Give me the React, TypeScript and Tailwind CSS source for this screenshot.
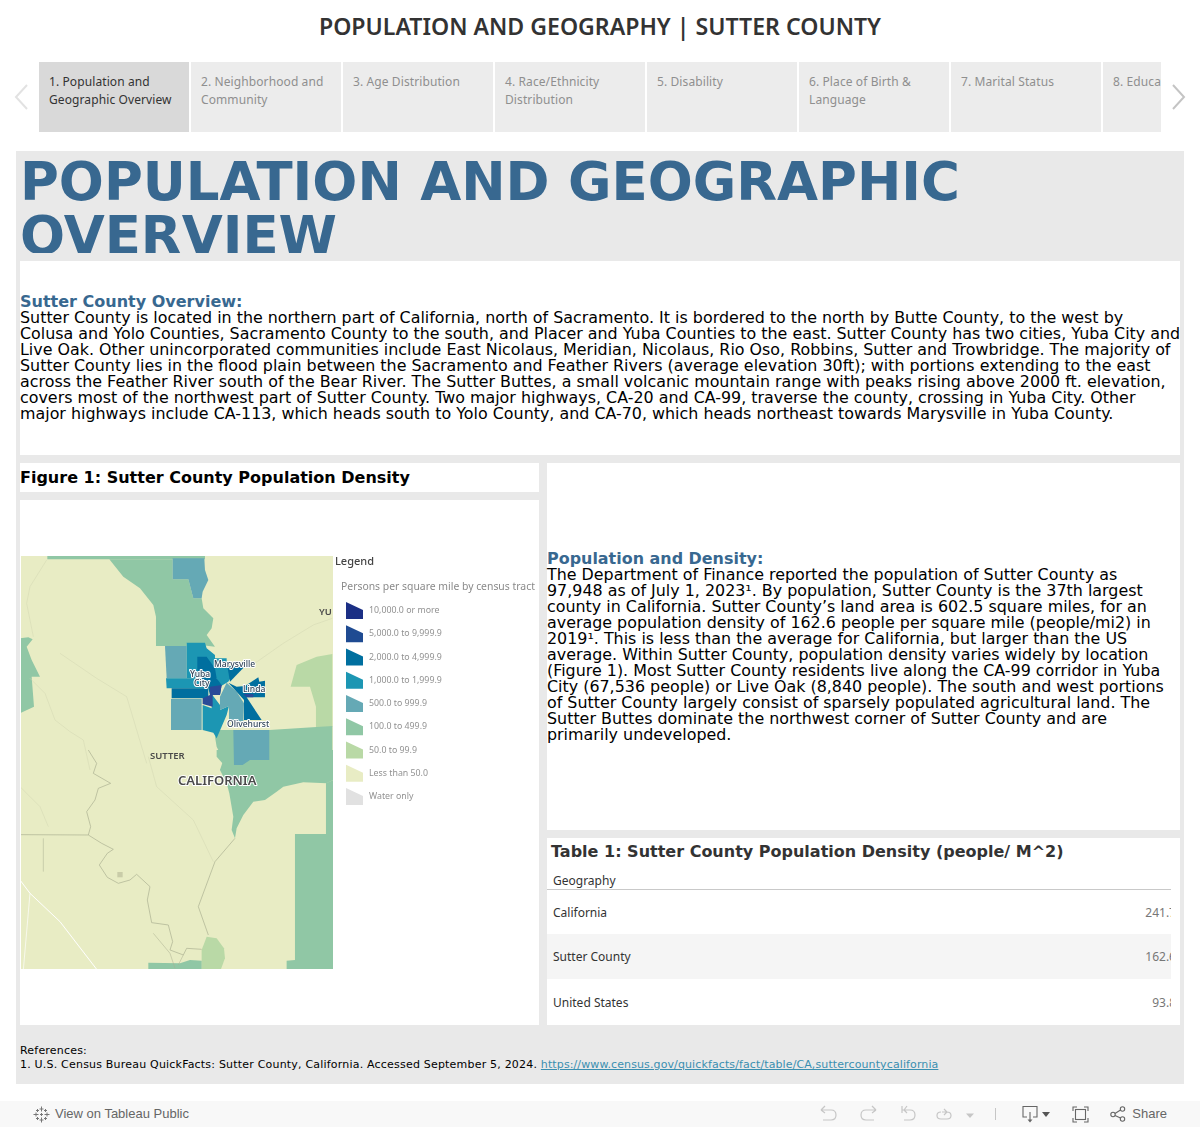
const tabs = [
  "1. Population and Geographic Overview",
  "2. Neighborhood and Community",
  "3. Age Distribution",
  "4. Race/Ethnicity Distribution",
  "5. Disability",
  "6. Place of Birth & Language",
  "7. Marital Status",
  "8. Education",
];

const legend = [
  { color: "#1b2f85", label: "10,000.0 or more" },
  { color: "#1f4b92", label: "5,000.0 to 9,999.9" },
  { color: "#006f9f", label: "2,000.0 to 4,999.9" },
  { color: "#1c96b3", label: "1,000.0 to 1,999.9" },
  { color: "#65a9b5", label: "500.0 to 999.9" },
  { color: "#90c7a5", label: "100.0 to 499.9" },
  { color: "#b9d9a6", label: "50.0 to 99.9" },
  { color: "#e8ecc4", label: "Less than 50.0" },
  { color: "#e1e1e1", label: "Water only" },
];

const rows = [
  { name: "California", value: "241.7", height: "h-[44px]", shaded: false },
  { name: "Sutter County", value: "162.6", height: "h-[45px]", shaded: true },
  { name: "United States", value: "93.8", height: "h-[46px]", shaded: false },
];

const overviewLines = [
  "Sutter County is located in the northern part of California, north of Sacramento. It is bordered to the north by Butte County, to the west by",
  "Colusa and Yolo Counties, Sacramento County to the south, and Placer and Yuba Counties to the east. Sutter County has two cities, Yuba City and",
  "Live Oak. Other unincorporated communities include East Nicolaus, Meridian, Nicolaus, Rio Oso, Robbins, Sutter and Trowbridge. The majority of",
  "Sutter County lies in the flood plain between the Sacramento and Feather Rivers (average elevation 30ft); with portions extending to the east",
  "across the Feather River south of the Bear River. The Sutter Buttes, a small volcanic mountain range with peaks rising above 2000 ft. elevation,",
  "covers most of the northwest part of Sutter County. Two major highways, CA-20 and CA-99, traverse the county, crossing in Yuba City. Other",
  "major highways include CA-113, which heads south to Yolo County, and CA-70, which heads northeast towards Marysville in Yuba County.",
];

const densityLines = [
  "The Department of Finance reported the population of Sutter County as",
  "97,948 as of July 1, 2023¹. By population, Sutter County is the 37th largest",
  "county in California. Sutter County’s land area is 602.5 square miles, for an",
  "average population density of 162.6 people per square mile (people/mi2) in",
  "2019¹. This is less than the average for California, but larger than the US",
  "average. Within Sutter County, population density varies widely by location",
  "(Figure 1). Most Sutter County residents live along the CA-99 corridor in Yuba",
  "City (67,536 people) or Live Oak (8,840 people). The south and west portions",
  "of Sutter County largely consist of sparsely populated agricultural land. The",
  "Sutter Buttes dominate the northwest corner of Sutter County and are",
  "primarily undeveloped.",
];

const sans = "font-['Noto_Sans','Open_Sans',sans-serif]";
const dejavu = "font-['DejaVu_Sans',sans-serif]";

const MapFigure = () => {
  const green = "#90c7a5";
  const pale = "#b9d9a6";
  const mid = "#65a9b5";
  const teal = "#1c96b3";
  const dark = "#006f9f";
  const navy = "#2a4a98";
  const label = {
    paintOrder: "stroke",
    stroke: "#ffffff",
    strokeWidth: 2,
    strokeLinejoin: "round" as const,
  };

  return (
    <svg viewBox="20 500 519 525" className="block w-[519px] h-[525px]">
      <clipPath id="map-clip">
        <rect x="21" y="556" width="312" height="413" />
      </clipPath>
      <g clipPath="url(#map-clip)">
        <g className="blur-[0.5px]">
          <rect x="15" y="550" width="325" height="425" fill="#e8ecc4" />
          <g transform="translate(20 550) scale(0.3333)">
            <path d="M82 18H555V28H82Z" fill={green} />
            <path d="M0 265L25 262 38 268 20 290 35 330 60 380 35 380 42 470 0 490Z" fill={green} />
            <path d="M812 410L830 345 890 320 937 312V530L888 532V470L870 410Z" fill={pale} />
            <path d="M268 28H458V88H505L520 145H545L550 175 565 190 580 205 575 235 560 255 585 290 500 280V288H408V200L400 165 360 115 310 80Z" fill={green} />
            <path d="M458 25H553L555 60 565 90 548 125 545 145H520L505 88H458Z" fill={mid} />
            <path d="M585 560L600 540H748L937 528V660H600L610 630 590 590Z" fill={green} />
            <path d="M435 288H500V385H440Z" fill={mid} />
            <path d="M500 278H555L560 295 585 315V325H620V345L640 370 625 395 600 410 590 385H500Z" fill={teal} />
            <path d="M438 385H560V415H440Z" fill={teal} />
            <path d="M532 320H560L585 355 590 385 605 405 600 435H570L565 415 545 385 532 360Z" fill={dark} />
            <path d="M455 415H565V445H455Z" fill={dark} />
            <path d="M453 447H545V540H453Z" fill={mid} />
            <path d="M548 465L575 475V432L600 465V480L627 468 620 495 590 565 580 548 548 540Z" fill={teal} />
            <path d="M620 398L650 425 672 460 670 515 627 510 627 468 600 480V440Z" fill={mid} />
            <path d="M625 398L650 410 675 408 715 382 718 395 735 392V442H680L725 510H672V450L650 425Z" fill={dark} />
            <path d="M622 348L672 352 630 395Z" fill={dark} />
            <path d="M570 410L605 405 600 435H578V470L548 462V445L570 435Z" fill={navy} />
            <path d="M670 432H700V442H680Z" fill={navy} />
            <g fill="none" stroke="#d3d7b2" strokeWidth="1.5">
              <path d="M80 30L30 110 20 160 40 260" />
              <path d="M30 385L75 430 105 510 150 545 190 570 210 660" />
              <path d="M320 440L380 640" />
              <path d="M320 440L230 385 120 310" />
              <path d="M690 350L790 280 880 225 937 205" />
            </g>
          </g>
          <g transform="translate(20 750) scale(0.3333)">
            <path d="M590 0H940V90L920 100 850 97 790 110 770 125 735 150 700 155 670 195 650 235 645 265 635 240 640 200 628 130 620 100 600 60 612 45 590 20Z" fill={green} />
            <path d="M918 100L940 90V660H800V632L825 630V252H918Z" fill={green} />
            <path d="M545 600L560 560 590 565 612 595 615 625 602 660H545Z" fill={pale} />
            <path d="M385 638L480 640 510 630 545 632V660H385Z" fill={green} />
            <rect x="292" y="366" width="16" height="16" fill="#c9cca8" />
            <g fill="none" stroke="#a9ae90" strokeWidth="2">
              <path d="M205 0L230 40 220 70 272 100 235 115 225 150 200 185 212 230 205 255 245 280 280 298 262 310 238 345 262 382 295 400 330 390 350 373 390 410 382 450 395 518 445 525 458 575 450 600 490 615 500 595 545 598" />
              <path d="M0 254L205 255" />
              <path d="M70 265V365" strokeWidth="1.5" />
              <path d="M645 265L585 335 535 470 565 555" />
              <path d="M490 615L475 645M400 550L450 610 465 655" strokeWidth="1.5" />
            </g>
            <g fill="none" stroke="#d3d7b2" strokeWidth="1.5">
              <path d="M385 20L410 110 520 210 580 335" />
              <path d="M0 110L60 170 85 230" />
            </g>
            <g fill="none" stroke="#ffffff" strokeWidth="3">
              <path d="M0 390L30 430 120 515 230 658" />
              <path d="M30 430L10 660" strokeWidth="2" />
            </g>
          </g>
          <g transform="translate(20 550) scale(0.3333)">
            <path d="M640 540H748V630H690L668 645H642Z" fill={mid} />
          </g>
        </g>
      </g>

      <g className={`${sans} blur-[0.25px]`}>
        <g fill="#33475b" fontSize="8.500" fontWeight="500" style={label}>
          <text x="214" y="667">Marysville</text>
          <text x="190" y="677">Yuba</text>
          <text x="194" y="686">City</text>
          <text x="243" y="692">Linda</text>
          <text x="227" y="727">Olivehurst</text>
        </g>
        <text x="150" y="759" fontSize="9.500" fontWeight="600" fill="#4a4a4a">SUTTER</text>
        <text x="178" y="785" fontSize="13" fontWeight="600" fill="#4a4a4a" style={label}>CALIFORNIA</text>
        <text x="319" y="615" fontSize="9.500" fontWeight="600" fill="#4a4a4a">YU</text>

        <text x="335" y="565" fontSize="11" fontWeight="500" fill="#444444">Legend</text>
        <text x="341" y="590" fontSize="10.400" fill="#8a8a8a">Persons per square mile by census tract</text>
        {legend.map((item, idx) => (
          <g key={item.label}>
            <path
              d={`M346 ${602 + idx * 23.25}L363 ${610 + idx * 23.25}V${619 + idx * 23.25}H346Z`}
              fill={item.color}
            />
            <text x="369" y={613 + idx * 23.25} fontSize="8.800" fill="#929292">
              {item.label}
            </text>
          </g>
        ))}
      </g>
    </svg>
  );
};

const Toolbar = () => (
  <div className="mt-[17px] h-[26px] bg-[#f8f8f8] flex items-center pl-[33px] pr-[33px] font-['Liberation_Sans',sans-serif] text-[13px] text-[#666666]">
    <svg viewBox="0 0 17 17" className="w-[17px] h-[17px] shrink-0" stroke="#777777" strokeWidth="1" fill="none">
      <path d="M8.500 0.500V5.500M6.500 3H10.500M8.500 11.500V16.500M6.500 14H10.500M0.500 8.500H5.500M3 6.500V10.500M11.500 8.500H16.500M14 6.500V10.500M4.500 3V6M3 4.500H6M12.500 3V6M11 4.500H14M4.500 11V14M3 12.500H6M12.500 11V14M11 12.500H14M7 8.500H10M8.500 7V10" />
    </svg>
    <span className="ml-[5px]">View on Tableau Public</span>
    <div className="ml-auto flex items-center">
      <svg viewBox="0 0 154 18" className="w-[154px] h-[18px]" fill="none" stroke="#c6c6c6" strokeWidth="1.2">
        <path d="M1 6H11C14 6 16 8 16 11S14 16 11 16H3M1 6L5 2M1 6L5 9" transform="translate(0 -1)" />
        <path d="M56 6H46C43 6 41 8 41 11S43 16 46 16H54M56 6L52 2M56 6L52 9" transform="translate(0 -1)" />
        <path d="M82 2V9M82 6H90C93 6 95 8 95 11S93 16 90 16H84M84 6L87 2M84 6L87 9" transform="translate(0 -1)" />
        <path d="M122 7H127C129.500 7 131 8.500 131 10.500S129.500 14 127 14H121C118.500 14 117 12.500 117 10.500S118.500 7 121 7M124 4L127 7 124 10" />
        <path d="M149 8.500H157L153 13Z" transform="translate(-3 0)" fill="#c6c6c6" stroke="none" />
      </svg>
      <div className="ml-[21px] w-px h-[12px] bg-[#c6c6c6]" />
      <svg viewBox="0 0 16 18" className="ml-[26px] w-[16px] h-[18px]" fill="none" stroke="#666666" strokeWidth="1.1">
        <path d="M5 12H1V1.500H15V12H11" />
        <path d="M8 7V16" />
        <path d="M5.500 14.500H10.500L8 17.500Z" fill="#666666" stroke="none" />
      </svg>
      <svg viewBox="0 0 8 5" className="ml-[4px] w-[8px] h-[5px]">
        <path d="M0 0H8L4 5Z" fill="#555555" />
      </svg>
      <svg viewBox="0 0 17 17" className="ml-[22px] w-[17px] h-[17px]" fill="none" stroke="#666666" strokeWidth="1.1">
        <path d="M1 5V1H5M12 1H16V5M16 12V16H12M5 16H1V12" />
        <rect x="3.500" y="3.500" width="10" height="10" />
      </svg>
      <svg viewBox="0 0 16 16" className="ml-[21px] w-[16px] h-[16px]" fill="none" stroke="#666666" strokeWidth="1.1">
        <circle cx="3" cy="8.500" r="2.200" />
        <circle cx="12.500" cy="3" r="2.200" />
        <circle cx="12.500" cy="13" r="2.200" />
        <path d="M5 7.500L10.500 4M5 9.500L10.500 12" />
      </svg>
      <span className="ml-[6px]">Share</span>
    </div>
  </div>
);

export default function App() {
  return (
    <div className="w-[1200px] h-[1127px] bg-white overflow-hidden">
      <div className={`h-[62px] pb-[9px] flex items-center justify-center ${sans} font-semibold text-[23.100px] text-[#333333]`}>
        POPULATION AND GEOGRAPHY | SUTTER COUNTY
      </div>

      <div className="flex items-center h-[70px] pl-[14px]">
        <svg viewBox="0 0 14 26" className="w-[14px] h-[26px] shrink-0" fill="none" stroke="#e2e2e2" strokeWidth="2">
          <path d="M13 1L2 13 13 25" />
        </svg>
        <div className="ml-[11px] w-[1122px] flex gap-[2px] overflow-hidden">
          {tabs.map((tab, idx) => (
            <div
              key={tab}
              className={`w-[150px] h-[70px] shrink-0 px-[10px] py-[11px] ${sans} text-[12px] leading-[18px] tracking-[0.1px] ${
                idx === 0 ? "bg-[#d9d9d9] text-[#333333]" : "bg-[#ececec] text-[#8f8f8f]"
              } ${idx === tabs.length - 1 ? "whitespace-nowrap" : ""}`}
            >
              {tab}
            </div>
          ))}
        </div>
        <svg viewBox="0 0 14 26" className="ml-[11px] w-[14px] h-[26px] shrink-0" fill="none" stroke="#c4c4c4" strokeWidth="2">
          <path d="M1 1L12 13 1 25" />
        </svg>
      </div>

      <div className={`mt-[19px] mx-4 h-[933px] bg-[#e9e9e9] ${dejavu}`}>
        <div className="h-[102px] overflow-hidden pl-[4px] pt-[4px] font-bold text-[53px] leading-[54px] text-[#386890]">
          POPULATION AND GEOGRAPHIC OVERVIEW
        </div>

        <div className="mt-2 mx-1 h-[194px] bg-white flex items-center text-[16px] leading-4 text-black">
          <div>
            <div className="font-bold text-[#386890]">Sutter County Overview:</div>
            <div className="text-[15.900px] whitespace-nowrap">
              {overviewLines.map((line) => (
                <div key={line}>{line}</div>
              ))}
            </div>
          </div>
        </div>

        <div className="mt-2 mx-1 flex gap-2 h-[562px]">
          <div className="w-[519px] flex flex-col gap-2">
            <div className="h-[29px] bg-white flex items-center font-bold text-[16px] text-black">
              Figure 1: Sutter County Population Density
            </div>
            <div className="h-[525px] bg-white">
              <MapFigure />
            </div>
          </div>

          <div className="w-[633px] flex flex-col gap-2">
            <div className="h-[367px] bg-white flex items-center text-[16px] leading-4 text-black">
              <div>
                <div className="font-bold text-[#386890] text-[15.950px]">Population and Density:</div>
                <div className="text-[15.900px] whitespace-nowrap">
                  {densityLines.map((line) => (
                    <div key={line}>{line}</div>
                  ))}
                </div>
              </div>
            </div>

            <div className="h-[187px] bg-white">
              <div className="h-[28px] pl-1 flex items-center font-bold text-[16px] text-[#333333]">
                Table 1: Sutter County Population Density (people/ M^2)
              </div>
              <div className={`w-[624px] ${sans} text-[12px] text-[#333333]`}>
                <div className="h-[24px] pl-[6px] pt-[6px] leading-[17px] border-b border-[#c9c9c9]">Geography</div>
                {rows.map((row) => (
                  <div
                    key={row.name}
                    className={`${row.height} pl-[6px] pt-[1px] flex items-center justify-between overflow-hidden ${
                      row.shaded ? "bg-[#f5f5f5]" : ""
                    }`}
                  >
                    <span>{row.name}</span>
                    <span className="-mr-[5px] text-[#777777]">{row.value}</span>
                  </div>
                ))}
              </div>
            </div>
          </div>
        </div>

        <div className="pt-[19px] px-1 text-[11px] leading-[14px] text-black tracking-[0.2px]">
          <div>References:</div>
          <div>
            1. U.S. Census Bureau QuickFacts: Sutter County, California. Accessed September 5, 2024.{" "}
            <a href="#" className="text-[#3a8fb0] underline tracking-[0.11px]">
              https://www.census.gov/quickfacts/fact/table/CA,suttercountycalifornia
            </a>
          </div>
        </div>
      </div>

      <Toolbar />
    </div>
  );
}
